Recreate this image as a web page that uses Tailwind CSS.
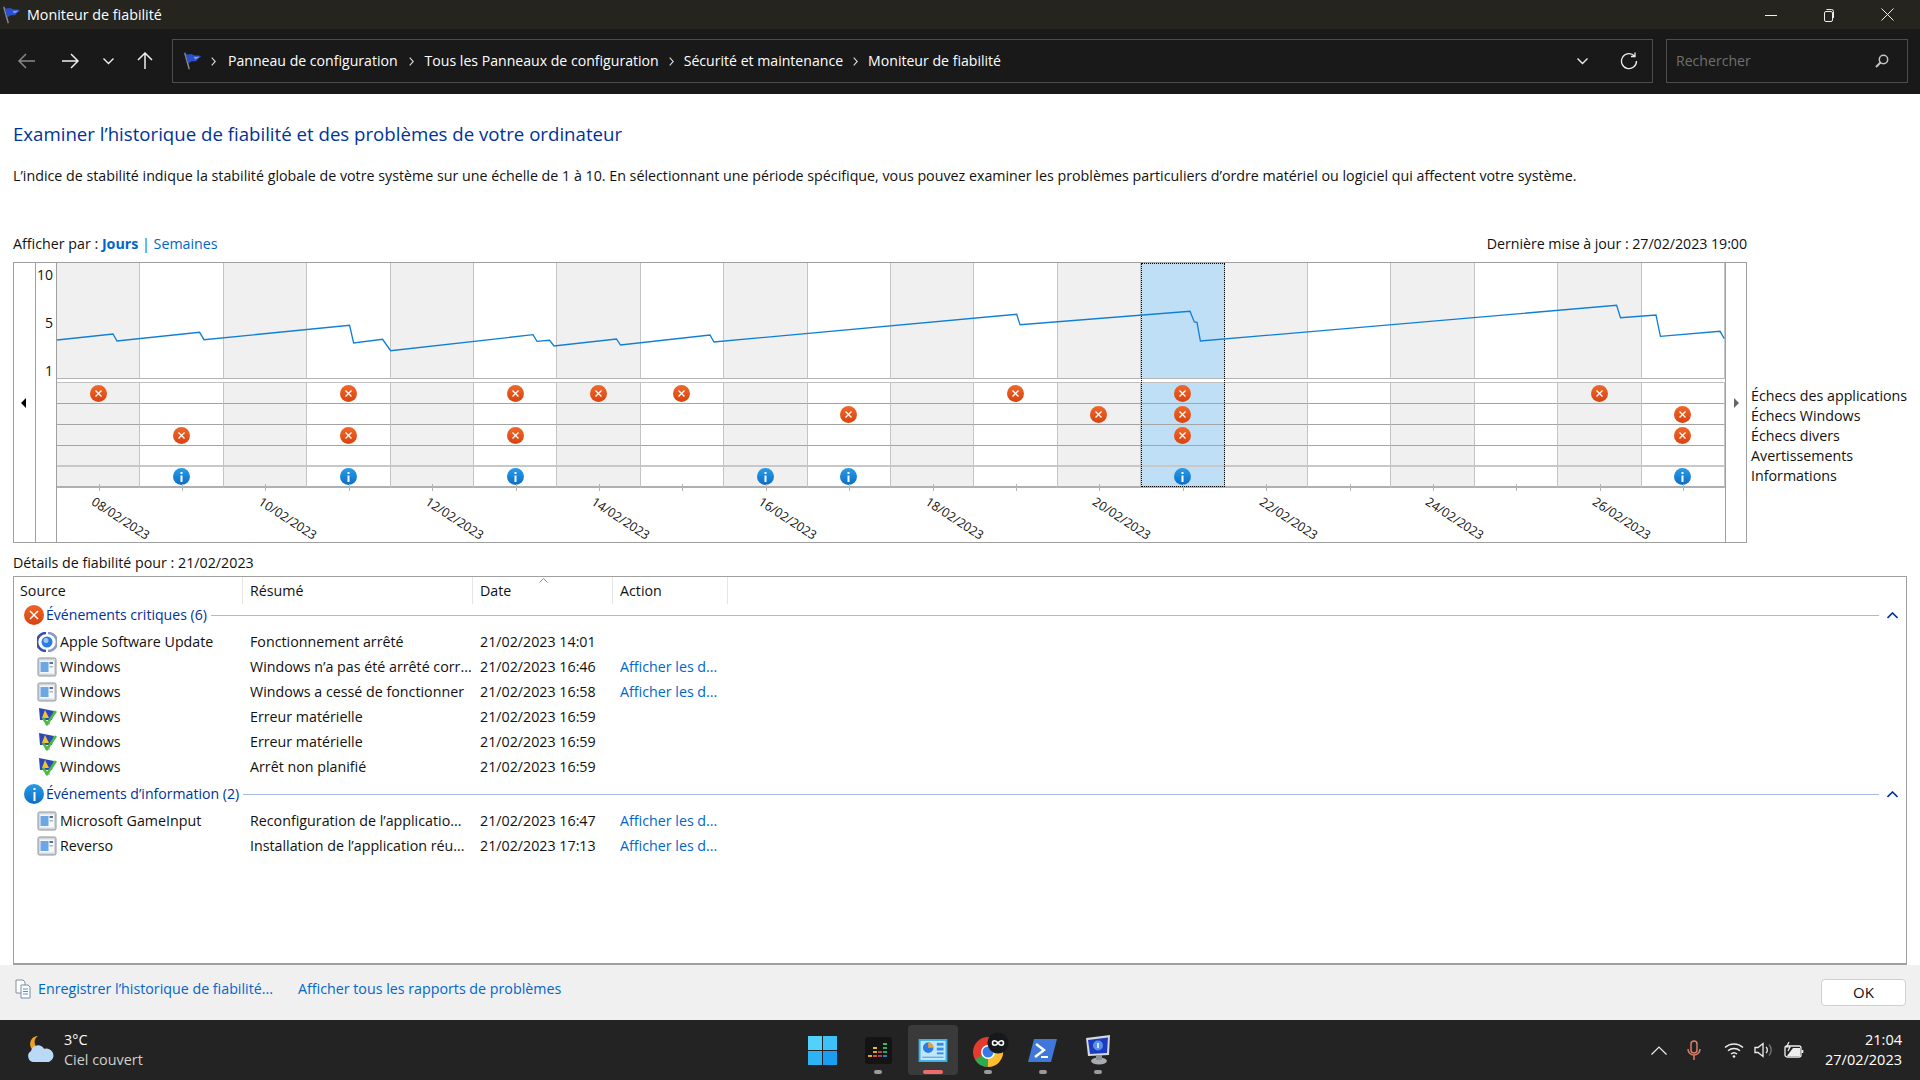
<!DOCTYPE html>
<html lang="fr">
<head>
    <meta charset="UTF-8">
    <title>Moniteur de fiabilité</title>
    <script src="https://cdn.jsdelivr.net/npm/@tailwindcss/browser@4"></script>
</head>
<body class="bg-white font-['Open_Sans','Noto_Sans',sans-serif] text-[14.25px] text-[#111] overflow-hidden">
<svg class="hidden">
    <symbol id="flag" viewBox="0 0 22 22">
        <path d="M3 2 L8 20" stroke="#8a8a8a" stroke-width="1.6" fill="none"/>
        <path d="M4 3 C8 5 10 2 12 4 C15 6 18 4 21 6 C18 8 17 9 16 11 C13 12 11 10 7 14 Z" fill="#2b4fc9"/>
        <path d="M13 6 C15 7 17 6 19 6.500 C17 8 15 9 14 9 Z" fill="#7d9bf0"/>
    </symbol>
    <symbol id="crumb" viewBox="0 0 5 9">
        <path d="M0.700 0.700 L4.300 4.500 L0.700 8.300" stroke="#ddd" stroke-width="1.100" fill="none"/>
    </symbol>
    <symbol id="appicon" viewBox="0 0 20 20">
        <rect x="1" y="1" width="18" height="18" rx="1.500" fill="#d4d8dd" stroke="#8f959b"/>
        <rect x="3" y="3.500" width="14" height="13" fill="#f6f8fb"/>
        <rect x="3.500" y="5" width="8" height="10" fill="#6ba6e6"/>
        <rect x="12.500" y="5" width="3.500" height="2" fill="#5a6f8c"/>
        <rect x="12.500" y="9" width="3.500" height="1.500" fill="#a8b8cc"/>
    </symbol>
    <symbol id="shieldicon" viewBox="0 0 20 20">
        <path d="M2 1 L17 4 L15 13 L3 13 Z" fill="#2d49b8"/>
        <path d="M8 3 L12 11 L5 11 Z" fill="#f4c430"/>
        <rect x="8" y="14" width="5" height="4" fill="#c4c9cf"/>
        <path d="M6 11 L10 17 L19 4" stroke="#4cbb3c" stroke-width="2.600" fill="none"/>
    </symbol>
    <symbol id="updateicon" viewBox="0 0 20 20">
        <path d="M9 1 A9 9 0 0 0 9 19" stroke="#3a4fa5" stroke-width="2.600" fill="none"/>
        <path d="M11 1 A9 9 0 0 1 11 19" stroke="#8d99c9" stroke-width="2.600" fill="none"/>
        <circle cx="10" cy="10" r="5.500" fill="#2a7de1"/>
        <circle cx="9" cy="8.500" r="2.500" fill="#9cc8f5"/>
    </symbol>
</svg>

<div class="w-[1920px] h-[1080px] flex flex-col">
    <!-- Title bar -->
    <div class="h-[29px] bg-[#25241e] flex items-center text-white shrink-0">
        <svg class="w-[20px] h-[20px] ml-[1px]"><use href="#flag"/></svg>
        <span class="ml-[6px] text-[14.3px] leading-[29px]">Moniteur de fiabilité</span>
        <div class="ml-auto flex items-center">
            <svg class="w-[12px] h-[12px] mr-[46px]" viewBox="0 0 12 12"><path d="M0 6.500 H12" stroke="#eee" stroke-width="1"/></svg>
            <svg class="w-[12px] h-[14px] mr-[46px]" viewBox="0 0 12 14" fill="none" stroke="#eee"><rect x="1.500" y="3.500" width="8" height="10" rx="1.500"/><path d="M3.500 1.500 H8.500 Q10.500 1.500 10.500 3.500 V10"/></svg>
            <svg class="w-[13px] h-[13px] mr-[26px]" viewBox="0 0 13 13" stroke="#eee" stroke-width="1"><path d="M0.500 0.500 L12.500 12.500 M12.500 0.500 L0.500 12.500"/></svg>
        </div>
    </div>

    <!-- Address bar -->
    <div class="h-[65px] bg-[#191919] flex items-start pt-[10px] text-white shrink-0">
        <div class="w-[172px] h-[44px] flex items-center shrink-0">
            <svg class="w-[18px] h-[16px] ml-[18px]" viewBox="0 0 18 16" fill="none" stroke="#8a8a8a" stroke-width="1.500"><path d="M17 8 H1 M8 1 L1 8 L8 15"/></svg>
            <svg class="w-[18px] h-[16px] ml-[25px]" viewBox="0 0 18 16" fill="none" stroke="#eee" stroke-width="1.500"><path d="M1 8 H17 M10 1 L17 8 L10 15"/></svg>
            <svg class="w-[11px] h-[7px] ml-[24px]" viewBox="0 0 11 7" fill="none" stroke="#eee" stroke-width="1.400"><path d="M0.500 0.500 L5.500 5.500 L10.500 0.500"/></svg>
            <svg class="w-[16px] h-[18px] ml-[23px]" viewBox="0 0 16 18" fill="none" stroke="#eee" stroke-width="1.500"><path d="M8 17 V1 M1 8 L8 1 L15 8"/></svg>
        </div>
        <div class="w-[1481px] h-[44px] border border-[#4d4d4d] flex items-center shrink-0 text-[14.1px]">
            <svg class="w-[20px] h-[20px] ml-[9px]"><use href="#flag"/></svg>
            <svg class="w-[5px] h-[9px] ml-[9px]"><use href="#crumb"/></svg>
            <span class="ml-[12px]">Panneau de configuration</span>
            <svg class="w-[5px] h-[9px] ml-[11px]"><use href="#crumb"/></svg>
            <span class="ml-[11px]">Tous les Panneaux de configuration</span>
            <svg class="w-[5px] h-[9px] ml-[10px]"><use href="#crumb"/></svg>
            <span class="ml-[10px]">Sécurité et maintenance</span>
            <svg class="w-[5px] h-[9px] ml-[10px]"><use href="#crumb"/></svg>
            <span class="ml-[10px]">Moniteur de fiabilité</span>
            <svg class="w-[11px] h-[7px] ml-auto" viewBox="0 0 11 7" fill="none" stroke="#eee" stroke-width="1.400"><path d="M0.500 0.500 L5.500 5.500 L10.500 0.500"/></svg>
            <svg class="w-[18px] h-[18px] ml-[32px] mr-[14px]" viewBox="0 0 18 18" fill="none" stroke="#eee" stroke-width="1.300"><path d="M14.500 4 A7.500 7.500 0 1 0 16.500 9 M15 0.500 V4.500 H11"/></svg>
        </div>
        <div class="w-[242px] h-[44px] ml-[13px] border border-[#4d4d4d] flex items-center shrink-0">
            <span class="ml-[9px] text-[14.1px] text-[#6f6f6f]">Rechercher</span>
            <svg class="w-[14px] h-[14px] ml-auto mr-[18px]" viewBox="0 0 14 14" fill="none" stroke="#c4c4c4" stroke-width="1.500"><circle cx="8.500" cy="5.500" r="4.200"/><path d="M5.500 8.500 L1 13" stroke-width="2"/></svg>
        </div>
    </div>

    <!-- Content -->
    <div class="flex-1 min-h-0 bg-white px-[13px] pt-[26px]">
        <h1 class="text-[18.65px] leading-[28px] text-[#003399]">Examiner l’historique de fiabilité et des problèmes de votre ordinateur</h1>
        <p class="mt-[18px] leading-[20px]">L’indice de stabilité indique la stabilité globale de votre système sur une échelle de 1 à 10. En sélectionnant une période spécifique, vous pouvez examiner les problèmes particuliers d’ordre matériel ou logiciel qui affectent votre système.</p>

        <div class="mt-[48px] w-[1734px] flex justify-between leading-[20px]">
            <span>Afficher par : <a class="font-bold text-[#0066cc]">Jours</a> <span class="text-[#0066cc]">|</span> <a class="text-[#0066cc]">Semaines</a></span>
            <span class="tracking-[-0.06px]">Dernière mise à jour : 27/02/2023 19:00</span>
        </div>

        <!-- Chart + legend -->
        <div class="mt-[8px] flex">
            <div class="w-[1734px] h-[281px] border border-[#a0a0a0] flex shrink-0">
                <div class="w-[22px] border-r border-[#a0a0a0] flex items-start justify-center pt-[135px] pr-[2px]">
                    <div class="w-0 h-0 border-y-[5px] border-y-transparent border-r-[5px] border-r-black"></div>
                </div>
                <div class="w-[21px] border-r border-[#a0a0a0]">
                    <div class="h-[117px] flex flex-col justify-between items-end pr-[3px] pt-[4px] pb-[1px] leading-[16px] text-[14px]">
                        <span>10</span><span>5</span><span>1</span>
                    </div>
                </div>
                <div id="chart" class="relative w-[1668px] grid grid-cols-[repeat(20,minmax(0,1fr))]">
                    <!-- Columns inserted below, the stability line sits on top -->
                </div>
                <div class="w-[21px] border-l border-[#a0a0a0] flex items-start justify-center pt-[135px]">
                    <div class="w-0 h-0 border-y-[5px] border-y-transparent border-l-[5px] border-l-[#666]"></div>
                </div>
            </div>
            <div class="ml-[4px] pt-[124px] leading-[20px] whitespace-nowrap">
                <div>Échecs des applications</div>
                <div>Échecs Windows</div>
                <div>Échecs divers</div>
                <div>Avertissements</div>
                <div>Informations</div>
            </div>
        </div>

        <div class="mt-[10px] leading-[20px]">Détails de fiabilité pour : 21/02/2023</div>

        <!-- Details list -->
        <div class="mt-[3px] w-[1894px] h-[389px] border border-[#a0a0a0] border-b-[2px] relative">
            <div class="flex h-[27px] items-center">
                <div class="w-[229px] h-full pl-[6px] border-r border-[#e5e5e5] leading-[27px]">Source</div>
                <div class="w-[230px] h-full pl-[7px] border-r border-[#e5e5e5] leading-[27px]">Résumé</div>
                <div class="w-[140px] h-full pl-[7px] border-r border-[#e5e5e5] leading-[27px] relative">Date
                    <svg class="absolute left-[66px] top-[1px] w-[9px] h-[5px]" viewBox="0 0 9 5" fill="none" stroke="#888"><path d="M0.500 4.500 L4.500 0.500 L8.500 4.500"/></svg>
                </div>
                <div class="w-[115px] h-full pl-[7px] border-r border-[#e5e5e5] leading-[27px]">Action</div>
            </div>
            <div id="groups"></div>
        </div>
    </div>

    <!-- Footer -->
    <div class="h-[55px] bg-[#f0f0f0] flex items-start shrink-0 relative">
        <svg class="w-[16px] h-[20px] ml-[15px] mt-[14px]" viewBox="0 0 16 20" fill="none">
            <path d="M1 1 H8 L10 3 V14 H1 Z" fill="#fff" stroke="#8a8f96"/>
            <path d="M6 6 H13 L15 8 V19 H6 Z" fill="#fff" stroke="#6f8fb5"/>
            <path d="M8 10 H13 M8 12.500 H13 M8 15 H13" stroke="#4a90d9"/>
        </svg>
        <a class="ml-[7px] mt-[14px] leading-[20px] text-[#0066cc]">Enregistrer l’historique de fiabilité...</a>
        <a class="ml-[25px] mt-[14px] leading-[20px] text-[#0066cc]">Afficher tous les rapports de problèmes</a>
        <button class="ml-auto mr-[14px] mt-[14px] w-[85px] h-[27px] bg-white border border-[#d0d0d0] rounded-[4px] text-[15px] leading-[25px]">OK</button>
    </div>

    <!-- Taskbar -->
    <div class="h-[60px] bg-[#232323] flex text-white shrink-0">
        <div class="w-[795px] flex items-center shrink-0">
            <svg class="w-[32px] h-[32px] ml-[24px]" viewBox="0 0 32 32">
                <path d="M14 2 A8 8 0 1 0 21 14 A6.500 6.500 0 0 1 14 2" fill="#f0a020"/>
                <path d="M9 28 A6 6 0 0 1 7 17 A7 7 0 0 1 20 15 A6.500 6.500 0 0 1 25 28 Z" fill="#b9d9f7"/>
            </svg>
            <div class="ml-[8px] text-[14.4px] leading-[20px]">
                <div>3°C</div>
                <div class="text-[#cfcfcf]">Ciel couvert</div>
            </div>
        </div>
        <div class="flex">
            <!-- Start -->
            <div class="w-[55px] flex items-center justify-center">
                <svg class="w-[29px] h-[29px]" viewBox="0 0 29 29">
                    <rect width="14" height="14" fill="#53d0fb"/><rect x="15" width="14" height="14" fill="#3cc1f8"/>
                    <rect y="15" width="14" height="14" fill="#2db2f6"/><rect x="15" y="15" width="14" height="14" fill="#1a9ff0"/>
                </svg>
            </div>
            <!-- Equalizer -->
            <div class="w-[55px] flex items-center justify-center relative">
                <svg class="w-[27px] h-[27px] ml-[2px]" viewBox="0 0 27 27">
                    <rect width="27" height="27" rx="3" fill="#141414"/>
                    <rect x="3" y="18" width="4" height="2" fill="#f0a020"/><rect x="8" y="18" width="4" height="2" fill="#d05030"/><rect x="8" y="14" width="4" height="2" fill="#e0a030"/><rect x="8" y="10" width="4" height="2" fill="#e0c030"/>
                    <rect x="13" y="18" width="4" height="2" fill="#a04060"/><rect x="13" y="14" width="4" height="2" fill="#c04040"/><rect x="18" y="18" width="4" height="2" fill="#3080c0"/><rect x="18" y="14" width="4" height="2" fill="#30a070"/><rect x="18" y="10" width="4" height="2" fill="#30b060"/><rect x="18" y="6" width="4" height="2" fill="#30c060"/>
                </svg>
                <span class="absolute bottom-[6px] w-[8px] h-[4px] rounded-full bg-[#9a9a9a]"></span>
            </div>
            <!-- Reliability monitor, active -->
            <div class="w-[55px] flex items-center justify-center relative">
                <div class="w-[50px] h-[50px] rounded-[4px] bg-[#3a3a3a] flex items-center justify-center">
                    <svg class="w-[30px] h-[23px]" viewBox="0 0 30 24">
                        <rect width="30" height="24" fill="#39b0e8"/>
                        <rect x="2" y="2" width="26" height="20" fill="#bfe6fa"/>
                        <circle cx="10" cy="9" r="5.500" fill="#2a7de1"/><path d="M10 9 V3.500 A5.500 5.500 0 0 1 15.500 9 Z" fill="#f0a030"/>
                        <rect x="19" y="4" width="7" height="3" fill="#3a8ee0"/><rect x="19" y="9" width="7" height="3" fill="#3a8ee0"/><rect x="19" y="14" width="7" height="2" fill="#3a8ee0"/>
                        <path d="M4 19 H26" stroke="#4a90d9"/>
                    </svg>
                </div>
                <span class="absolute bottom-[6px] w-[20px] h-[4px] rounded-full bg-[#f06a6a]"></span>
            </div>
            <!-- Chrome -->
            <div class="w-[55px] flex items-center justify-center relative">
                <svg class="w-[36px] h-[36px] ml-[6px]" viewBox="0 0 36 36">
                    <circle cx="15" cy="20" r="15" fill="#e33b2e"/>
                    <path d="M15 20 L2 27.500 A15 15 0 0 0 15 35 Z" fill="#2fa84f"/>
                    <path d="M15 20 L15 35 A15 15 0 0 0 28 12.500 L15 12.500 Z" fill="#fbc02d"/>
                    <circle cx="15" cy="20" r="7" fill="#fff"/><circle cx="15" cy="20" r="5.500" fill="#3b78e7"/>
                    <circle cx="25" cy="11" r="10.500" fill="#15181c"/>
                    <path d="M25 11 C23 8 19.500 8 19.500 11 C19.500 14 23 14 25 11 C27 8 30.500 8 30.500 11 C30.500 14 27 14 25 11" stroke="#fff" stroke-width="1.600" fill="none"/>
                </svg>
                <span class="absolute bottom-[6px] w-[8px] h-[4px] rounded-full bg-[#9a9a9a]"></span>
            </div>
            <!-- PowerShell -->
            <div class="w-[55px] flex items-center justify-center relative">
                <svg class="w-[29px] h-[23px]" viewBox="0 0 29 23">
                    <path d="M6 0 H29 L23 23 H0 Z" fill="#3f78d8"/>
                    <path d="M8 5 L16 11 L7 18" stroke="#fff" stroke-width="2.400" fill="none"/><path d="M13 18 H20" stroke="#fff" stroke-width="2"/>
                </svg>
                <span class="absolute bottom-[6px] w-[8px] h-[4px] rounded-full bg-[#9a9a9a]"></span>
            </div>
            <!-- System info -->
            <div class="w-[55px] flex items-center justify-center relative">
                <svg class="w-[28px] h-[30px]" viewBox="0 0 28 30">
                    <path d="M2 3 L26 0 L25 20 L4 21 Z" fill="#d5d9de"/>
                    <path d="M4 5 L24 2.500 L23 18 L6 19 Z" fill="#1c3cc0"/>
                    <circle cx="14" cy="10.500" r="5" fill="#5c8fe8"/><path d="M14 8 V13" stroke="#fff" stroke-width="1.500"/>
                    <ellipse cx="15" cy="26" rx="8" ry="3.500" fill="#a8adb3"/><rect x="12" y="20" width="6" height="5" fill="#8d9298"/>
                </svg>
                <span class="absolute bottom-[6px] w-[8px] h-[4px] rounded-full bg-[#9a9a9a]"></span>
            </div>
        </div>
        <div class="flex-1 flex items-center">
            <svg class="w-[16px] h-[9px] ml-[526px]" viewBox="0 0 16 9" fill="none" stroke="#eee" stroke-width="1.200"><path d="M0.500 8.500 L8 1 L15.500 8.500"/></svg>
            <svg class="w-[14px] h-[20px] ml-[20px]" viewBox="0 0 14 20" fill="none" stroke="#d9806a" stroke-width="1.500"><rect x="4" y="1" width="6" height="12" rx="3"/><path d="M1 9 A6 6 0 0 0 13 9 M7 15 V20"/></svg>
            <svg class="w-[20px] h-[16px] ml-[23px]" viewBox="0 0 20 16" fill="none" stroke="#eee" stroke-width="1.500"><path d="M1 5.500 A13 13 0 0 1 19 5.500 M4 8.800 A9 9 0 0 1 16 8.800 M7 12 A4.500 4.500 0 0 1 13 12"/><circle cx="10" cy="14.500" r="1.300" fill="#eee" stroke="none"/></svg>
            <svg class="w-[19px] h-[16px] ml-[10px]" viewBox="0 0 19 16" fill="none" stroke="#eee" stroke-width="1.300"><path d="M1 5.500 H4 L9 1.500 V14.500 L4 10.500 H1 Z M12 5 A4 4 0 0 1 12 11"/><path d="M15 2.500 A8 8 0 0 1 15 13.500" stroke="#777"/></svg>
            <svg class="w-[20px] h-[16px] ml-[11px]" viewBox="0 0 20 16" fill="none" stroke="#eee" stroke-width="1.300"><rect x="1" y="4" width="16" height="11" rx="2"/><path d="M18.500 8 V11" stroke-width="1.600"/><path d="M3 14 L9 6 H16 V14 Z" fill="#eee" stroke="none"/><path d="M5 0 L2.500 5 H6 L4 9" stroke-width="1.200"/></svg>
            <div class="ml-auto mr-[18px] text-right text-[14.5px] leading-[20px] whitespace-nowrap">
                <div>21:04</div>
                <div>27/02/2023</div>
            </div>
        </div>
    </div>
</div>

<script>
    // Reliability data, one entry per day from 08/02 to 27/02
    const appFails = [0, 3, 5, 6, 7, 11, 13, 18];
    const winFails = [9, 12, 13, 19];
    const miscFails = [1, 3, 5, 13, 19];
    const infos = [1, 3, 5, 8, 9, 13, 19];
    const selected = 13;
    const dates = ['08', '10', '12', '14', '16', '18', '20', '22', '24', '26'];

    const linePoints = '0,77 56,71 60,78 142.6,69.3 147,76.7 292.6,62.3 296.6,80 325.6,76.3 333.6,87.7 476,71.7 480,78.3 492.6,77.3 497,83 559.5,76 563.5,82 653,72 657,79 959.7,51.3 963,61.7 1133,48.3 1137.3,59 1140,59.3 1143.4,78 1559.6,42.3 1563.5,54.7 1599,52 1603.4,73.3 1663,68.3 1667.3,75.7';

    const failMark = `<div class="w-[17px] h-[17px] rounded-full bg-linear-to-b from-[#f0682a] to-[#d8420e] flex items-center justify-center"><svg class="w-[7px] h-[7px]" viewBox="0 0 7 7" stroke="#fff" stroke-width="1.300"><path d="M0.500 0.500 L6.500 6.500 M6.500 0.500 L0.500 6.500"/></svg></div>`;
    const infoMark = `<div class="w-[17px] h-[17px] rounded-full bg-linear-to-b from-[#2a9be8] to-[#0b6fc4] flex items-center justify-center"><svg class="w-[3px] h-[10px]" viewBox="0 0 3 10" fill="#fff"><rect x="0.500" y="0" width="2" height="2"/><rect x="0.500" y="3.500" width="2" height="6.500"/></svg></div>`;

    function cell(mark, border, bg) {
        return `<div class="h-[21px] ${border} border-r border-r-[#c4c4c4] flex items-center justify-center ${bg}">${mark || ''}</div>`;
    }

    function renderChart() {
        let html = '';
        for (let i = 0; i < 20; i++) {
            const isSel = i === selected;
            const bg = isSel ? 'bg-[#bfdff7]' : (i % 2 === 0 ? 'bg-[#f0f0f0]' : 'bg-white');
            const date = i % 2 === 0 ? dates[i / 2] : null;
            html += `<div class="relative flex flex-col">
                <div class="h-[116px] ${bg} border-b border-[#b4b4b4] border-r border-r-[#c4c4c4]"></div>
                <div class="h-[4px] bg-white border-b border-[#c0c0c0]"></div>
                ${cell(appFails.includes(i) ? failMark : '', 'border-b border-b-[#a4a4a4]', bg)}
                ${cell(winFails.includes(i) ? failMark : '', 'border-b border-b-[#a4a4a4]', bg)}
                ${cell(miscFails.includes(i) ? failMark : '', 'border-b border-b-[#a4a4a4]', bg)}
                ${cell('', 'border-b-[2px] border-b-[#c8c8c8]', bg)}
                ${cell(infos.includes(i) ? infoMark : '', 'border-b-[2px] border-b-[#b0b0b0]', bg)}
                <div class="absolute left-1/2 top-[221px] w-px h-[7px] bg-[#b4b4b4]"></div>
                ${isSel ? '<div class="absolute left-0 right-0 top-0 h-[224px] border border-dotted border-black"></div>' : ''}
                ${date ? `<div class="absolute left-[40px] top-[231px] origin-top-left rotate-[33deg] text-[12.5px] leading-[16px] whitespace-nowrap">${date}/02/2023</div>` : ''}
            </div>`;
        }
        html += `<svg class="absolute left-0 top-0 w-[1668px] h-[117px]" viewBox="0 0 1668 117" fill="none"><polyline points="${linePoints}" stroke="#0f7fd6" stroke-width="1.300"/></svg>`;
        document.getElementById('chart').innerHTML = html;
    }

    // Detail rows
    const groups = [
        {
            title: 'Événements critiques (6)', kind: 'error',
            rows: [
                ['updateicon', 'Apple Software Update', 'Fonctionnement arrêté', '21/02/2023 14:01', ''],
                ['appicon', 'Windows', 'Windows n’a pas été arrêté corr...', '21/02/2023 16:46', 'Afficher les d...'],
                ['appicon', 'Windows', 'Windows a cessé de fonctionner', '21/02/2023 16:58', 'Afficher les d...'],
                ['shieldicon', 'Windows', 'Erreur matérielle', '21/02/2023 16:59', ''],
                ['shieldicon', 'Windows', 'Erreur matérielle', '21/02/2023 16:59', ''],
                ['shieldicon', 'Windows', 'Arrêt non planifié', '21/02/2023 16:59', ''],
            ]
        },
        {
            title: 'Événements d’information (2)', kind: 'info',
            rows: [
                ['appicon', 'Microsoft GameInput', 'Reconfiguration de l’applicatio...', '21/02/2023 16:47', 'Afficher les d...'],
                ['appicon', 'Reverso', 'Installation de l’application réu...', '21/02/2023 17:13', 'Afficher les d...'],
            ]
        }
    ];

    function renderGroups() {
        document.getElementById('groups').innerHTML = groups.map((g, idx) => `
            <div class="flex items-center h-[22px] pl-[10px] ${idx ? 'mt-[4px]' : ''}">
                <div class="w-[20px] h-[20px] rounded-full flex items-center justify-center shrink-0 ${g.kind === 'error' ? 'bg-linear-to-b from-[#ee6428] to-[#d8420e]' : 'bg-linear-to-b from-[#2a9be8] to-[#0b6fc4]'}">
                    ${g.kind === 'error'
                        ? '<svg class="w-[10px] h-[10px]" viewBox="0 0 10 10" stroke="#fff" stroke-width="1.500"><path d="M1 1 L9 9 M9 1 L1 9"/></svg>'
                        : '<svg class="w-[3px] h-[13px]" viewBox="0 0 3 13" fill="#fff"><rect x="0.500" width="2" height="2"/><rect x="0.500" y="4" width="2" height="9"/></svg>'}
                </div>
                <span class="ml-[2px] text-[14.1px] text-[#003399] whitespace-nowrap">${g.title}</span>
                <div class="flex-1 h-px bg-[#a8bbe0] ml-[4px]"></div>
                <svg class="w-[11px] h-[7px] ml-[8px] mr-[8px]" viewBox="0 0 11 7" fill="none" stroke="#003399" stroke-width="1.600"><path d="M0.500 6 L5.500 1 L10.500 6"/></svg>
            </div>
            <div class="pt-[3px]">
            ${g.rows.map(r => `
                <div class="flex items-center h-[25px] whitespace-nowrap">
                    <div class="w-[229px] pl-[23px] flex items-center">
                        <svg class="w-[20px] h-[20px] shrink-0"><use href="#${r[0]}"/></svg>
                        <span class="ml-[3px]">${r[1]}</span>
                    </div>
                    <div class="w-[230px] pl-[7px]">${r[2]}</div>
                    <div class="w-[140px] pl-[7px]">${r[3]}</div>
                    <a class="pl-[7px] text-[#0066cc]">${r[4]}</a>
                </div>`).join('')}
            </div>`).join('');
    }

    renderChart();
    renderGroups();
</script>
</body>
</html>
